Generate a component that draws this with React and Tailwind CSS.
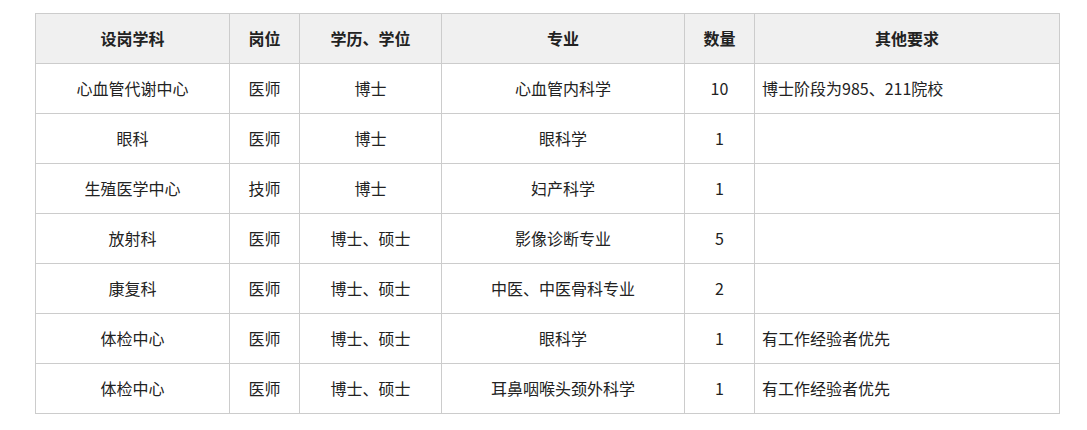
export default function App() {
  const headers = ["设岗学科", "岗位", "学历、学位", "专业", "数量", "其他要求"];
  const widths = ["w-[194px]", "w-[70px]", "w-[142px]", "w-[243px]", "w-[70px]", "w-[305px]"];
  const rows = [
    ["心血管代谢中心", "医师", "博士", "心血管内科学", "10", "博士阶段为985、211院校"],
    ["眼科", "医师", "博士", "眼科学", "1", ""],
    ["生殖医学中心", "技师", "博士", "妇产科学", "1", ""],
    ["放射科", "医师", "博士、硕士", "影像诊断专业", "5", ""],
    ["康复科", "医师", "博士、硕士", "中医、中医骨科专业", "2", ""],
    ["体检中心", "医师", "博士、硕士", "眼科学", "1", "有工作经验者优先"],
    ["体检中心", "医师", "博士、硕士", "耳鼻咽喉头颈外科学", "1", "有工作经验者优先"],
  ];
  return (
    <div
      className="w-[1087px] h-[430px] bg-white pt-[13px] pl-[35px] text-[#222]"
      style={{ fontFamily: '"Microsoft YaHei", "Noto Sans CJK SC", "Noto Sans", sans-serif' }}
    >
      <table className="border-collapse table-fixed w-[1025px] text-[16px] leading-none">
        <thead>
          <tr className="bg-[#f0f0f0] h-[50px]">
            {headers.map((h, i) => (
              <th key={i} className={`${widths[i]} border border-[#cccccc] font-bold text-center p-0 pb-[2px]`}>
                {h}
              </th>
            ))}
          </tr>
        </thead>
        <tbody>
          {rows.map((r, ri) => (
            <tr key={ri} className="h-[50px]">
              {r.map((c, ci) => (
                <td
                  key={ci}
                  className={`border border-[#cccccc] p-0 pb-[2px] ${ci === 5 ? "text-left pl-[7px]" : "text-center"}`}
                >
                  {c}
                </td>
              ))}
            </tr>
          ))}
        </tbody>
      </table>
    </div>
  );
}
